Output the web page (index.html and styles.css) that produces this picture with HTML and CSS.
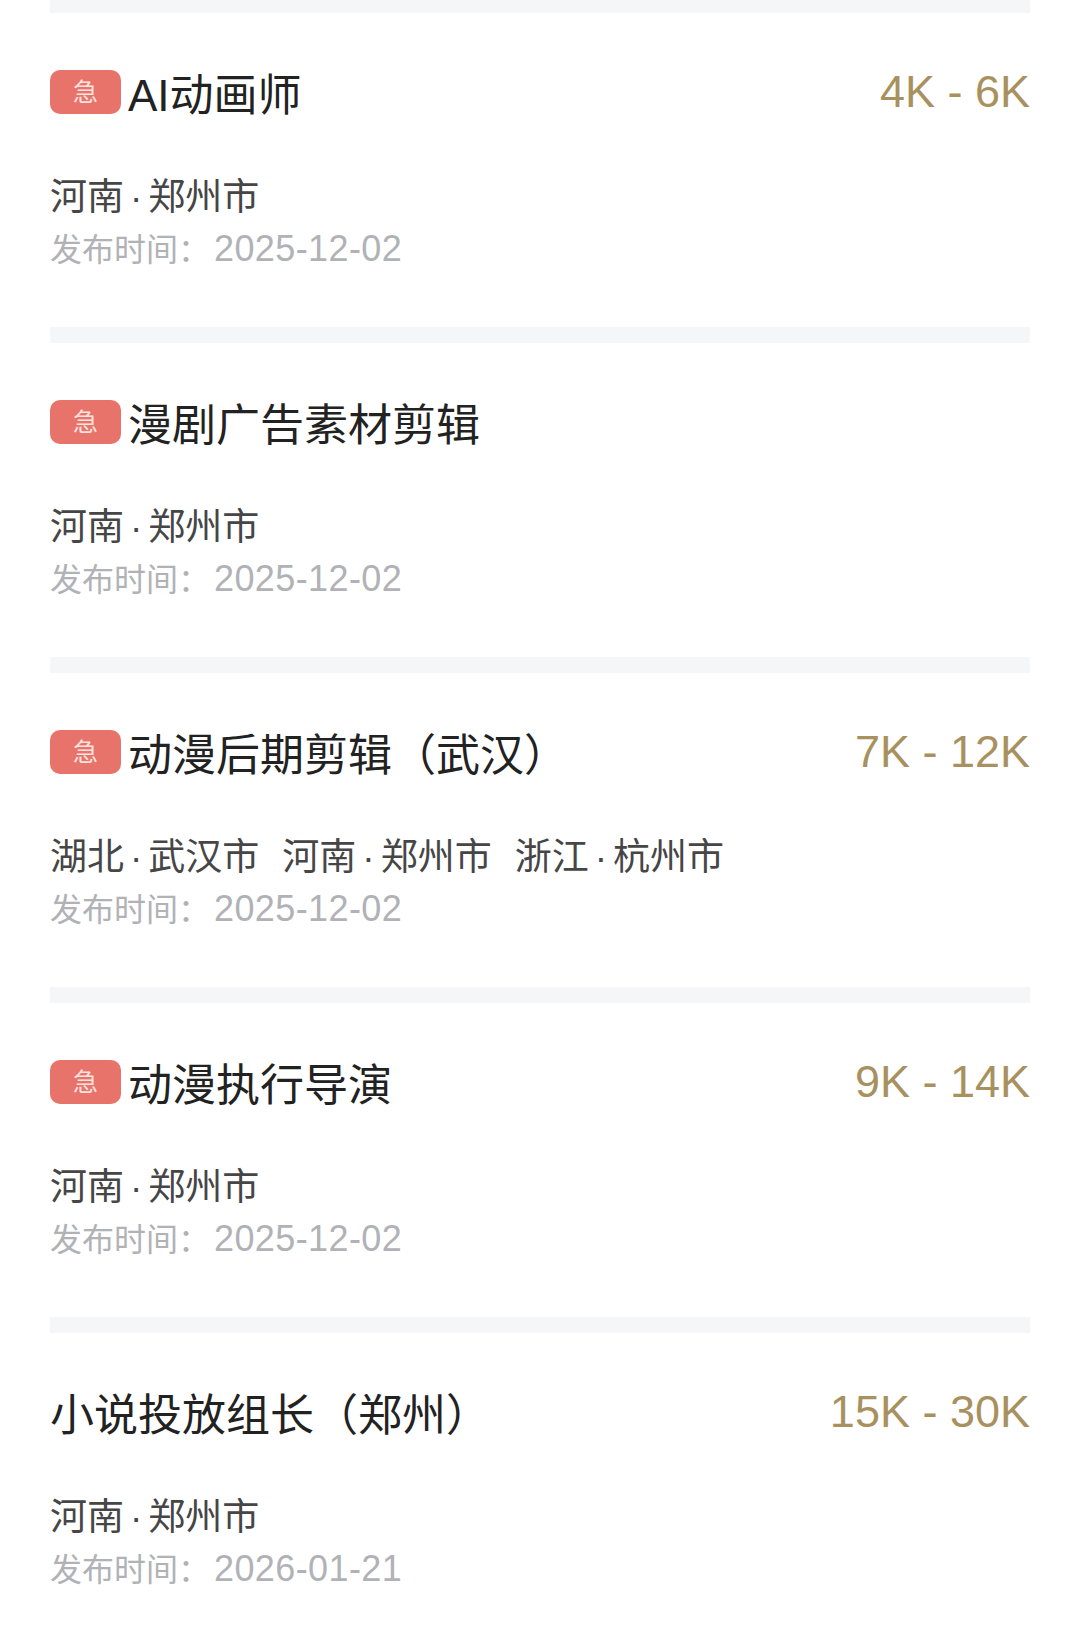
FILE: index.html
```html
<!DOCTYPE html>
<html lang="zh-CN">
<head>
  <meta charset="UTF-8" />
  <meta name="viewport" content="width=device-width, initial-scale=1.0"/>
  <title>职位列表</title>
  <link rel="stylesheet" href="styles.css">
</head>
<body>
  <div class="list">
    <div class="divider first"></div>

    <div class="job">
      <div class="job-head">
        <div class="job-title"><span class="tag">急</span>AI动画师</div>
        <div class="salary">4K - 6K</div>
      </div>
      <div class="places"><span>河南<i class="dot">·</i>郑州市</span></div>
      <div class="date">发布时间：<span class="num">2025-12-02</span></div>
    </div>
    <div class="divider"></div>

    <div class="job">
      <div class="job-head">
        <div class="job-title"><span class="tag">急</span>漫剧广告素材剪辑</div>
      </div>
      <div class="places"><span>河南<i class="dot">·</i>郑州市</span></div>
      <div class="date">发布时间：<span class="num">2025-12-02</span></div>
    </div>
    <div class="divider"></div>

    <div class="job">
      <div class="job-head">
        <div class="job-title"><span class="tag">急</span>动漫后期剪辑（武汉）</div>
        <div class="salary">7K - 12K</div>
      </div>
      <div class="places">
        <span>湖北<i class="dot">·</i>武汉市</span>
        <span>河南<i class="dot">·</i>郑州市</span>
        <span>浙江<i class="dot">·</i>杭州市</span>
      </div>
      <div class="date">发布时间：<span class="num">2025-12-02</span></div>
    </div>
    <div class="divider"></div>

    <div class="job">
      <div class="job-head">
        <div class="job-title"><span class="tag">急</span>动漫执行导演</div>
        <div class="salary">9K - 14K</div>
      </div>
      <div class="places"><span>河南<i class="dot">·</i>郑州市</span></div>
      <div class="date">发布时间：<span class="num">2025-12-02</span></div>
    </div>
    <div class="divider"></div>

    <div class="job">
      <div class="job-head">
        <div class="job-title">小说投放组长（郑州）</div>
        <div class="salary">15K - 30K</div>
      </div>
      <div class="places"><span>河南<i class="dot">·</i>郑州市</span></div>
      <div class="date">发布时间：<span class="num">2026-01-21</span></div>
    </div>
  </div>
</body>
</html>
```

FILE: styles.css
```css
body {
  font-family: "Liberation Sans", "Noto Sans CJK SC", sans-serif;
  background-color: #fff;
  color: #222;
  margin: 0;
  padding: 0;
}
.list {
  padding: 0 50px;
}
.divider {
  height: 16px;
  background-color: #f5f6f8;
}
.divider.first {
  height: 13px;
}
.job {
  height: 314px;
  padding-top: 57px;
  box-sizing: border-box;
}
.job-head {
  display: flex;
  justify-content: space-between;
  align-items: center;
  height: 44px;
}
.job-title {
  display: flex;
  align-items: center;
  font-size: 44px;
  color: #222;
}
.tag {
  display: inline-block;
  width: 71px;
  height: 44px;
  line-height: 44px;
  margin-right: 7px;
  text-align: center;
  font-size: 25px;
  color: #fde3df;
  background-color: #e8736b;
  border-radius: 10px;
}
.salary {
  font-size: 45px;
  color: #a8915f;
}
.places {
  display: flex;
  gap: 23px;
  margin-top: 64px;
  font-size: 37px;
  line-height: 40px;
  color: #464646;
}
.dot {
  font-style: normal;
  margin: 0 6px;
}
.date {
  margin-top: 10px;
  font-size: 32px;
  line-height: 42px;
  color: #b0b2b6;
}
.date .num {
  margin-left: 4px;
  font-size: 36px;
  letter-spacing: 0.4px;
}
```
